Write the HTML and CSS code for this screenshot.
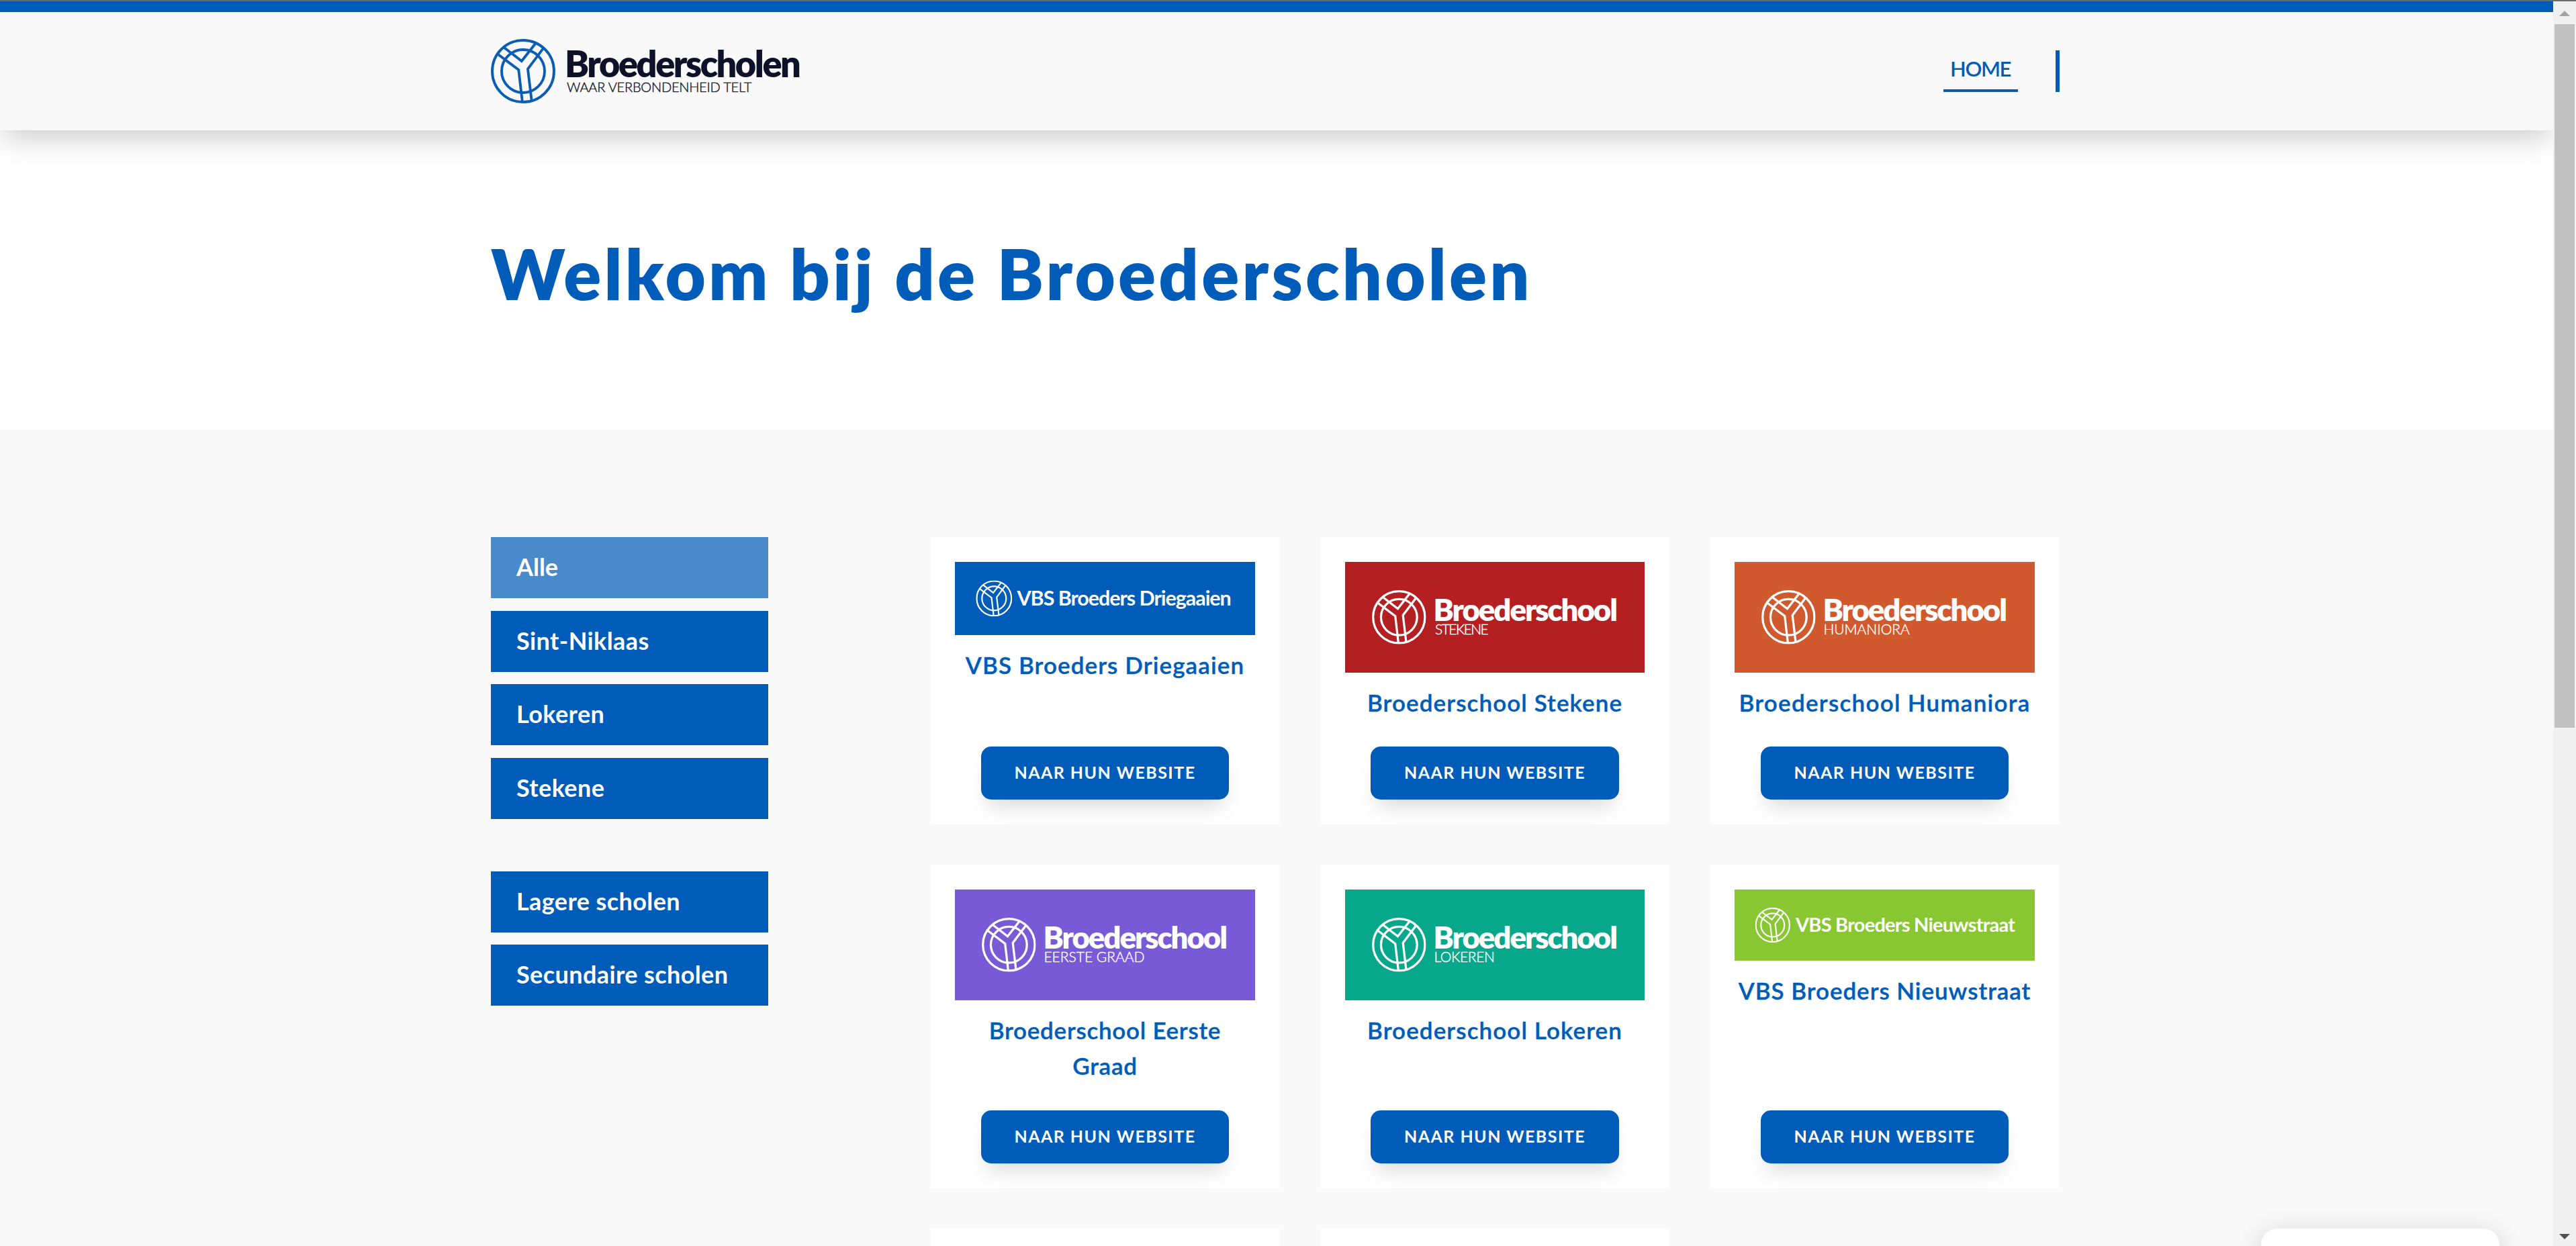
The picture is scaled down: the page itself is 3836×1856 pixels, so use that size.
FILE: index.html
```html
<!DOCTYPE html>
<html lang="nl">
<head>
<meta charset="utf-8">
<title>Broederscholen</title>
<link rel="stylesheet" href="styles.css">
</head>
<body>
<svg class="defs" aria-hidden="true">
  <symbol id="emblem" viewBox="0 0 96 96">
    <g fill="none" stroke="currentColor" stroke-width="3.9">
      <circle cx="48" cy="48" r="46"/>
      <circle cx="48" cy="48" r="32"/>
      <path d="M18.6 12 45.8 33 66.8 6.3M10.3 22.7 41.3 46 46.8 93M78.5 13.3 55 44.7 60.6 91.5"/>
    </g>
  </symbol>
</svg>
<div class="window-edge"></div>
<div class="window">
  <div class="page">
    <header class="header">
      <a class="brand">
        <svg width="470" height="96" viewBox="0 0 470 96">
          <use href="#emblem" class="brand-emblem" width="96" height="96"/>
          <text class="brand-name" x="110" y="57">Broederscholen</text>
          <text class="brand-tag" x="113" y="78.5">WAAR VERBONDENHEID TELT</text>
        </svg>
      </a>
      <nav class="nav"><a class="nav-link">HOME</a><span class="nav-bar"></span></nav>
    </header>
    <section class="hero"><h1 class="hero-title">Welkom bij de Broederscholen</h1></section>
    <main class="schools">
      <aside class="filters">
        <ul class="filter-group">
          <li class="filter filter-active">Alle</li>
          <li class="filter">Sint-Niklaas</li>
          <li class="filter">Lokeren</li>
          <li class="filter">Stekene</li>
        </ul>
        <ul class="filter-group">
          <li class="filter">Lagere scholen</li>
          <li class="filter">Secundaire scholen</li>
        </ul>
      </aside>
      <div class="cards">
        <article class="card">
          <svg class="banner blue" viewBox="0 0 446.7 109">
            <use href="#emblem" x="31.3" y="27.4" width="54" height="54"/>
            <text class="vbs driegaaien" x="92.5" y="65.5">VBS Broeders Driegaaien</text>
          </svg>
          <h2 class="card-title">VBS Broeders Driegaaien</h2>
          <a class="button">NAAR HUN WEBSITE</a>
        </article>
        <article class="card">
          <svg class="banner red" viewBox="0 0 446.7 164.6">
            <use href="#emblem" x="40" y="42" width="80.7" height="80.7"/>
            <text class="school" x="131.5" y="88.3">Broederschool</text>
            <text class="sub stekene" x="134" y="108">STEKENE</text>
          </svg>
          <h2 class="card-title">Broederschool Stekene</h2>
          <a class="button">NAAR HUN WEBSITE</a>
        </article>
        <article class="card">
          <svg class="banner orange" viewBox="0 0 446.7 164.6">
            <use href="#emblem" x="40" y="42" width="80.7" height="80.7"/>
            <text class="school" x="131.5" y="88.3">Broederschool</text>
            <text class="sub" x="132.5" y="108">HUMANIORA</text>
          </svg>
          <h2 class="card-title humaniora">Broederschool Humaniora</h2>
          <a class="button">NAAR HUN WEBSITE</a>
        </article>
        <article class="card">
          <svg class="banner purple" viewBox="0 0 446.7 164.6">
            <use href="#emblem" x="40" y="42" width="80.7" height="80.7"/>
            <text class="school" x="131.5" y="88.3">Broederschool</text>
            <text class="sub" x="132.5" y="108">EERSTE GRAAD</text>
          </svg>
          <h2 class="card-title eerste">Broederschool Eerste Graad</h2>
          <a class="button">NAAR HUN WEBSITE</a>
        </article>
        <article class="card">
          <svg class="banner teal" viewBox="0 0 446.7 164.6">
            <use href="#emblem" x="40" y="42" width="80.7" height="80.7"/>
            <text class="school" x="131.5" y="88.3">Broederschool</text>
            <text class="sub lokeren" x="132.5" y="108">LOKEREN</text>
          </svg>
          <h2 class="card-title">Broederschool Lokeren</h2>
          <a class="button">NAAR HUN WEBSITE</a>
        </article>
        <article class="card">
          <svg class="banner green" viewBox="0 0 446.7 106">
            <use href="#emblem" x="30.5" y="26.8" width="52.5" height="52.5"/>
            <text class="vbs nieuwstraat" x="91" y="63">VBS Broeders Nieuwstraat</text>
          </svg>
          <h2 class="card-title nieuw">VBS Broeders Nieuwstraat</h2>
          <a class="button">NAAR HUN WEBSITE</a>
        </article>
        <article class="card card-next"></article>
        <article class="card card-next"></article>
      </div>
    </main>
    <div class="chat-panel"></div>
  </div>
  <div class="scrollbar">
    <svg class="arrow" viewBox="0 0 16 8"><path d="M0 8 8 0 16 8z" fill="#a3a3a3"/></svg>
    <div class="thumb"></div>
    <svg class="arrow arrow-down" viewBox="0 0 16 8"><path d="M0 0 8 8 16 0z" fill="#505050"/></svg>
  </div>
</div>
</body>
</html>
```

FILE: styles.css
```css
* { box-sizing: border-box; }

body {
  margin: 0;
  height: 1856px;
  overflow: hidden;
  display: flex;
  flex-direction: column;
  background: #fff;
  color: #005cb9;
  font-family: Lato, "Liberation Sans", sans-serif;
}

.defs { position: absolute; width: 0; height: 0; }
.window-edge { flex: none; height: 2px; background: #6b6b6b; }
.window { flex: 1; min-height: 0; display: flex; }

.page {
  position: relative;
  flex: 1;
  height: 1854px;
  overflow: hidden;
  display: flex;
  flex-direction: column;
}

/* Header */
.header {
  position: relative;
  z-index: 1;
  flex: none;
  height: 192px;
  padding: 0 735px 0 731px;
  border-top: 16px solid #005cb9;
  background: #f9f9f9;
  box-shadow: 0 16px 40px -4px rgba(0, 0, 0, .2);
  display: flex;
  align-items: center;
  justify-content: space-between;
}
.brand svg { display: block; }
.brand-emblem { color: #0a5cb5; }
.brand-name { fill: #0f1128; font-size: 54px; font-weight: 800; letter-spacing: -2.43px; }
.brand-tag {
  fill: #0f1128;
  stroke: #0f1128;
  stroke-width: .4px;
  font-size: 20px;
  font-weight: 300;
  letter-spacing: -.2px;
}

.nav { display: flex; gap: 56px; }
.nav-link {
  width: 111px;
  height: 62px;
  padding-left: 10px;
  border-bottom: 4px solid #0f5aa9;
  font-size: 31px;
  font-weight: 600;
  line-height: 54px;
  letter-spacing: -1.4px;
}
.nav-bar { width: 6px; height: 62px; background: #005cb9; }

/* Hero */
.hero { flex: none; height: 446px; padding: 153px 0 0 731px; }
.hero-title {
  margin: 0;
  font-size: 104px;
  font-weight: 800;
  line-height: 120px;
  letter-spacing: 4.2px;
  white-space: nowrap;
}

/* School overview */
.schools {
  flex: 1;
  min-height: 0;
  padding: 160px 735.2px 0 731px;
  background: #f9f9f9;
  display: flex;
  align-items: flex-start;
  justify-content: space-between;
}

.filters { width: 413px; display: flex; flex-direction: column; gap: 78px; }
.filter-group {
  margin: 0;
  padding: 0;
  list-style: none;
  display: flex;
  flex-direction: column;
  gap: 18.6px;
}
.filter {
  height: 91px;
  padding-left: 38px;
  background: #005cb9;
  color: #fff;
  font-size: 36px;
  font-weight: 700;
  line-height: 89px;
  letter-spacing: .4px;
}
.filter-active { background: #498bca; letter-spacing: 0; }

.cards {
  width: 1681.6px;
  display: grid;
  grid-template-columns: repeat(3, 1fr);
  gap: 60px;
}
.card {
  padding: 37px;
  background: #fff;
  text-align: center;
  display: flex;
  flex-direction: column;
  align-items: center;
}
.card-next { height: 428px; }

.banner { display: block; width: 100%; color: #fff; flex: none; }
.banner text { fill: #fff; }
.blue { background: #005cb9; }
.red { background: #b41f21; }
.orange { background: #d0592d; }
.purple { background: #785ad6; }
.teal { background: #06a78b; }
.green { background: #88c632; }

.school { font-size: 45.5px; font-weight: 800; letter-spacing: -2.02px; }
.sub { font-size: 21px; font-weight: 300; stroke: #fff; stroke-width: .4px; }
.stekene { letter-spacing: -1.54px; }
.lokeren { letter-spacing: -.36px; }
.vbs { font-weight: 700; }
.driegaaien { font-size: 30.5px; letter-spacing: -1.03px; }
.nieuwstraat { font-size: 29px; letter-spacing: -.75px; }

.card-title {
  margin: 18px 0 39.6px;
  font-size: 35px;
  font-weight: 600;
  line-height: 53.3px;
  letter-spacing: 1.1px;
  -webkit-text-stroke: .4px currentColor;
}
.humaniora { letter-spacing: 1.28px; }
.eerste { letter-spacing: .73px; }
.nieuw { letter-spacing: .95px; }

.button {
  width: 369.5px;
  height: 78.7px;
  margin-top: auto;
  border-radius: 15px;
  background: #005cb9;
  box-shadow: 0 20px 30px -10px rgba(0, 0, 0, .15);
  color: #fff;
  font-size: 25px;
  font-weight: 700;
  line-height: 77px;
  letter-spacing: 1.46px;
}

/* Chat panel peeking in over the bottom edge */
.chat-panel {
  position: absolute;
  left: 3367px;
  top: 1828px;
  width: 355px;
  height: 200px;
  border-radius: 24px;
  background: #fff;
  box-shadow: 0 10px 40px rgba(0, 0, 0, .2);
}

/* Scrollbar */
.scrollbar {
  width: 34px;
  height: 1854px;
  padding: 14px 0 10px;
  background: #f0f0f0;
  display: flex;
  flex-direction: column;
  align-items: center;
}
.arrow { width: 16px; height: 8px; flex: none; }
.arrow-down { margin-top: auto; }
.thumb { width: 30px; height: 1048px; margin-top: 12px; background: #c1c1c1; }
```
